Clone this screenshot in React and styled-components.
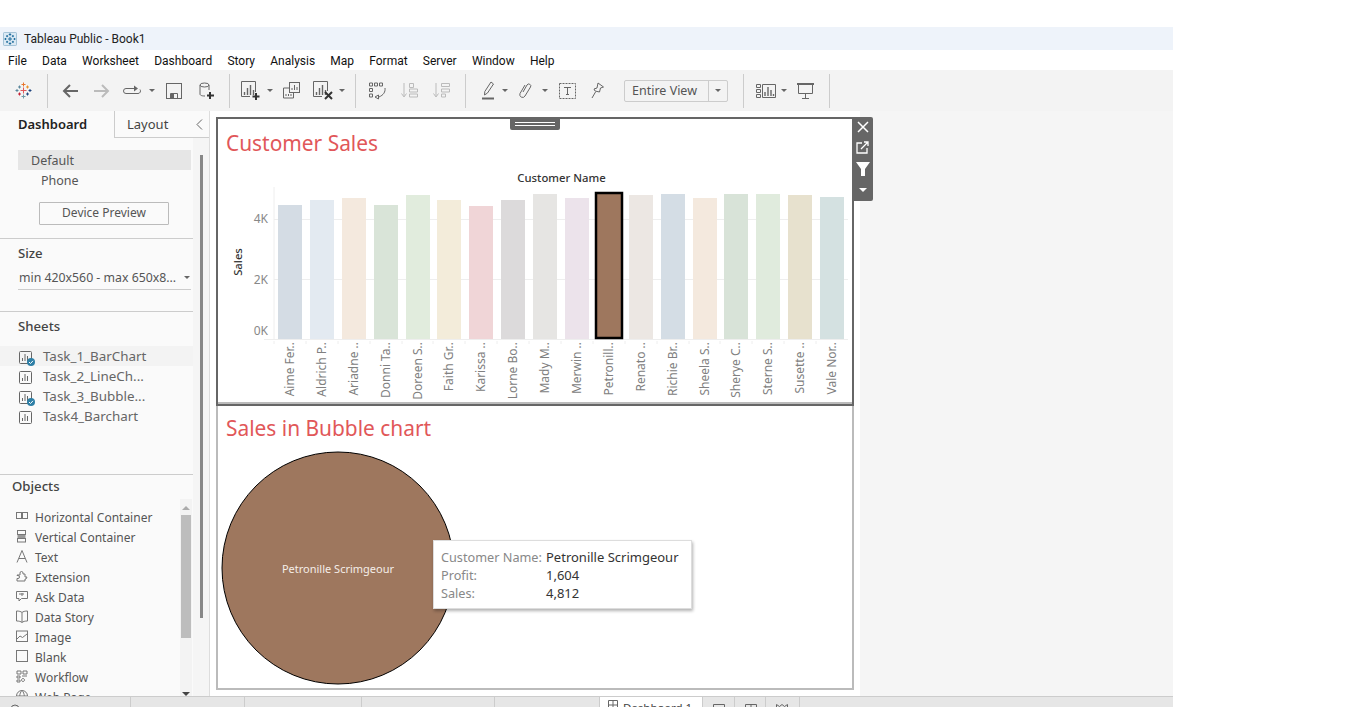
import React from "react";
import styled, { createGlobalStyle } from "styled-components";

const FONT = `"Noto Sans", "Open Sans", Arial, sans-serif`;
const ICON = "#666";
const OFF = "#bbb";

const GlobalStyle = createGlobalStyle`
	html, body {
		margin: 0;
		padding: 0;
		height: 100%;
		background: #fff;
		overflow: hidden;
	}
	body {
		font-family: ${FONT};
		color: #333;
	}
`;

const bars = [
	{ name: "Aime Fer..", x: 278, top: 205, color: "#d4dce4" },
	{ name: "Aldrich P..", x: 310, top: 200, color: "#e3eaf1" },
	{ name: "Ariadne ..", x: 342, top: 198, color: "#f4e9de" },
	{ name: "Donni Ta..", x: 374, top: 205, color: "#d9e4d8" },
	{ name: "Doreen S..", x: 406, top: 195, color: "#e1ecdd" },
	{ name: "Faith Gr..", x: 437, top: 200, color: "#f3ecda" },
	{ name: "Karissa ..", x: 469, top: 206, color: "#f0d5d7" },
	{ name: "Lorne Bo..", x: 501, top: 200, color: "#dcdadb" },
	{ name: "Mady M..", x: 533, top: 194, color: "#e6e5e3" },
	{ name: "Merwin ..", x: 565, top: 198, color: "#ece3eb" },
	{ name: "Petronill..", x: 597, top: 194, color: "#9e775e", selected: true },
	{ name: "Renato ..", x: 629, top: 195, color: "#ece7e3" },
	{ name: "Richie Br..", x: 661, top: 194, color: "#d4dde5" },
	{ name: "Sheela S..", x: 693, top: 198, color: "#f4e9de" },
	{ name: "Sherye C..", x: 724, top: 194, color: "#d8e3d8" },
	{ name: "Sterne S..", x: 756, top: 194, color: "#e0ebdd" },
	{ name: "Susette ..", x: 788, top: 195, color: "#e7e1ce" },
	{ name: "Vale Nor..", x: 820, top: 197, color: "#d4e1e1" },
];

const menus = ["File", "Data", "Worksheet", "Dashboard", "Story", "Analysis", "Map", "Format", "Server", "Window", "Help"];

const Page = styled.div`
	width: 1173px;
	height: 707px;
	padding-top: 27px;
	box-sizing: border-box;
	display: flex;
	flex-direction: column;
	overflow: hidden;
`;

const TitleBar = styled.div`
	height: 23px;
	background: #eef3fa;
	display: flex;
	align-items: center;
	gap: 7px;
	padding-left: 3px;
	font-family: Roboto, sans-serif;
	font-size: 12px;
	color: #222;
`;

const MenuBar = styled.div`
	height: 20px;
	display: flex;
	align-items: center;
	padding: 2px 0 0 8px;
	box-sizing: border-box;
	gap: 15.2px;
	font-family: Roboto, sans-serif;
	font-size: 12px;
	color: #111;
`;

const Toolbar = styled.div`
	height: 41px;
	background: #f3f3f3;
	display: flex;
	align-items: center;
	padding-left: 15px;
`;

const Sep = styled.div`
	width: 1px;
	height: 34px;
	background: #ccc;
	margin-left: ${(p) => p.$ml}px;
`;

const Ico = styled.svg`
	flex: none;
	display: block;
	margin-left: ${(p) => p.$ml || 0}px;
`;

const Combo = styled.div`
	margin-left: ${(p) => p.$ml}px;
	width: 104px;
	height: 22px;
	box-sizing: border-box;
	border: 1px solid #ccc;
	border-radius: 2px;
	display: flex;
	align-items: center;
	font-size: 12.5px;
	color: #555;
`;

const ComboText = styled.span`
	flex: 1;
	padding-left: 7px;
`;

const ComboArrow = styled.span`
	width: 18px;
	height: 100%;
	border-left: 1px solid #ccc;
	display: flex;
	align-items: center;
	justify-content: center;
`;

const Caret = styled.span`
	flex: none;
	width: 0;
	height: 0;
	margin-left: ${(p) => p.$ml || 0}px;
	border-left: 3px solid transparent;
	border-right: 3px solid transparent;
	border-top: 3px solid ${(p) => p.$color || "#666"};
`;

const Body = styled.div`
	flex: 1;
	min-height: 0;
	display: flex;
	background: #f5f5f5;
`;

const Side = styled.aside`
	width: 210px;
	box-sizing: border-box;
	flex: none;
	display: flex;
	flex-direction: column;
	background: #fafafa;
	border-right: 1px solid #ddd;
`;

const Tabs = styled.div`
	height: 27px;
	flex: none;
	display: flex;
`;

const Tab = styled.div`
	box-sizing: border-box;
	width: ${(p) => p.$w}px;
	display: flex;
	align-items: center;
	justify-content: space-between;
	font-size: 13px;
	font-weight: ${(p) => (p.$active ? 600 : 400)};
	color: ${(p) => (p.$active ? "#222" : "#444")};
	padding-left: ${(p) => (p.$active ? 18 : 12)}px;
	padding-right: 6px;
	padding-bottom: ${(p) => (p.$active ? 1 : 0)}px;
	border-left: ${(p) => (p.$active ? "none" : "1px solid #ccc")};
	border-bottom: ${(p) => (p.$active ? "none" : "1px solid #ccc")};
`;

const SideBody = styled.div`
	flex: 1;
	min-height: 0;
	display: flex;
`;

const SideMain = styled.div`
	width: 193px;
	flex: none;
	display: flex;
	flex-direction: column;
	min-height: 0;
`;

const Gutter = styled.div`
	flex: 1;
	background: #f5f5f5;
	padding: 17px 0 0 7px;
`;

const GutterThumb = styled.div`
	width: 3px;
	height: 463px;
	background: #888;
`;

const Section = styled.section`
	box-sizing: border-box;
	flex: none;
	height: ${(p) => p.$h}px;
	padding-top: ${(p) => p.$pt || 0}px;
	border-bottom: 1px solid #ccc;
`;

const DeviceRow = styled.div`
	height: 20px;
	line-height: 22px;
	margin-left: 18px;
	width: 173px;
	box-sizing: border-box;
	font-size: 12.5px;
	color: #555;
	padding-left: ${(p) => p.$indent}px;
	background: ${(p) => (p.$active ? "#e6e6e6" : "transparent")};
`;

const DeviceButton = styled.div`
	margin: 12px 0 0 39px;
	width: 130px;
	height: 23px;
	box-sizing: border-box;
	border: 1px solid #bbb;
	border-radius: 1px;
	padding-bottom: 2px;
	font-size: 12px;
	color: #555;
	display: flex;
	align-items: center;
	justify-content: center;
`;

const Heading = styled.div`
	height: 20px;
	line-height: 20px;
	font-size: 13.2px;
	font-weight: 500;
	color: #444;
	padding-left: ${(p) => p.$left || 18}px;
`;

const SizeSelect = styled.div`
	margin: 4px 2px 0 18px;
	height: 23px;
	box-sizing: border-box;
	border-bottom: 1px solid #ccc;
	display: flex;
	align-items: center;
	justify-content: space-between;
	font-size: 12.3px;
	padding: 0 1px 2px;
	color: #555;
	white-space: nowrap;
`;

const SheetList = styled.div`
	margin-top: 10px;
`;

const SheetRow = styled.div`
	height: 20px;
	display: flex;
	align-items: center;
	padding-left: 19px;
	gap: 11px;
	font-size: 13.4px;
	color: #666;
	background: ${(p) => (p.$active ? "#f3f3f3" : "transparent")};
`;

const SheetIconWrap = styled.span`
	position: relative;
	width: 13px;
	height: 13px;
	flex: none;
`;

const SheetCheck = styled.svg`
	position: absolute;
	right: -3px;
	bottom: -3px;
`;

const Objects = styled.div`
	flex: 1;
	min-height: 0;
	padding-top: 1px;
	display: flex;
	flex-direction: column;
`;

const ObjectsBody = styled.div`
	flex: 1;
	min-height: 0;
	margin-top: 3px;
	display: flex;
`;

const ObjectList = styled.div`
	width: 180px;
	padding-top: 7px;
	overflow: hidden;
`;

const ObjectRow = styled.div`
	height: 20px;
	display: flex;
	align-items: center;
	gap: 7px;
	padding-left: 16px;
	font-size: 12px;
	color: #555;
	white-space: nowrap;
`;

const ObjectLabel = styled.span`
	padding-top: 2px;
`;

const InnerScroll = styled.div`
	width: 12px;
	margin-right: 1px;
	background: #f3f3f3;
	display: flex;
	flex-direction: column;
	align-items: center;
	padding-top: 7px;
	gap: 5px;
`;

const InnerThumb = styled.div`
	width: 10px;
	height: 123px;
	background: #bdbdbd;
`;

const ScrollUp = styled.span`
	width: 0;
	height: 0;
	border-left: 4px solid transparent;
	border-right: 4px solid transparent;
	border-bottom: 4px solid #aaa;
`;

const ScrollDown = styled.span`
	width: 0;
	height: 0;
	margin-top: 49px;
	border-left: 4px solid transparent;
	border-right: 4px solid transparent;
	border-top: 4px solid #444;
`;

const Canvas = styled.main`
	width: 650px;
	flex: none;
	background: #fff;
	padding: 6px 0 0 6px;
	box-sizing: border-box;
`;

const Frame = styled.div`
	position: relative;
	width: 638px;
`;

const Sheet = styled.div`
	position: relative;
	box-sizing: border-box;
	height: ${(p) => p.$h}px;
	border: 2px solid ${(p) => p.$border};
	border-top-width: ${(p) => (p.$noTop ? 0 : 2)}px;
	box-shadow: ${(p) => (p.$lined ? "inset 0 -2px 0 #bbb" : "none")};
`;

const SheetTitle = styled.div`
	height: ${(p) => p.$h}px;
	padding-left: 8px;
	box-sizing: border-box;
	display: flex;
	align-items: center;
	font-size: 20.9px;
	color: #e15759;
`;

const Chart = styled.svg`
	display: block;
	font-family: ${FONT};
`;

const Handle = styled.div`
	position: absolute;
	left: 294px;
	top: 0;
	width: 50px;
	height: 13px;
	background: #666;
	border-radius: 0 0 2px 2px;
	display: flex;
	flex-direction: column;
	align-items: center;
	justify-content: center;
	gap: 2px;
`;

const HandleLine = styled.span`
	width: 40px;
	height: 1px;
	background: #fff;
`;

const FloatBar = styled.div`
	position: absolute;
	left: 637px;
	top: 0;
	width: 20px;
	height: 84px;
	background: #666;
	border-radius: 0 2px 2px 0;
	display: flex;
	flex-direction: column;
	align-items: center;
	padding: 4px 1px 0 0;
	box-sizing: border-box;
	gap: 8px;
`;

const FloatCaret = styled.svg`
	margin-top: 2px;
`;

const Tooltip = styled.div`
	position: absolute;
	left: 215px;
	top: 134px;
	width: 259px;
	height: 69px;
	box-sizing: border-box;
	background: #fff;
	border: 1px solid #ddd;
	box-shadow: 1px 2px 3px rgba(0, 0, 0, 0.3);
	padding: 7px 0 0 7px;
	display: grid;
	grid-template-columns: 105px 1fr;
	grid-auto-rows: 18px;
	align-items: center;
	font-size: 12.7px;
	white-space: nowrap;
`;

const TipKey = styled.span`
	color: #888;
`;

const TipValue = styled.span`
	color: #333;
	font-size: 13px;
`;

const StatusBar = styled.footer`
	height: 11px;
	flex: none;
	box-sizing: border-box;
	background: #e6e6e6;
	border-top: 1px solid #ccc;
	display: flex;
	overflow: hidden;
`;

const StatusCell = styled.div`
	box-sizing: border-box;
	width: ${(p) => p.$w}px;
	flex: none;
	height: 20px;
	border-right: 1px solid #ccc;
	display: flex;
	align-items: flex-start;
	gap: 5px;
	padding: ${(p) => p.$pt || 6}px 0 0 ${(p) => p.$pl || 0}px;
	font-size: 11.5px;
	line-height: 16px;
	color: #444;
	background: ${(p) => (p.$active ? "#fff" : "transparent")};
`;

const Crosses = ({ list, size = 17, view = 34 }) => (
	<Ico width={size} height={size} viewBox={`0 0 ${view} ${view}`}>
		{list.map(([x, y, r, c], i) => (
			<path key={i} d={`M${x - r} ${y}H${x + r}M${x} ${y - r}V${y + r}`} stroke={c} strokeWidth="2" />
		))}
	</Ico>
);

const logoCrosses = [
	[17, 5, 4, "#e8762c"], [9, 10, 3, "#5b879b"], [25, 10, 3, "#eb912b"], [4, 17, 3, "#59879b"],
	[17, 17, 6, "#e15759"], [30, 17, 3, "#1f447e"], [9, 24, 3, "#c72035"], [25, 24, 3, "#1f447e"], [17, 29, 4, "#7099a6"],
];

const WinLogo = () => (
	<Ico width="14" height="14" viewBox="0 0 34 34">
		<rect x="1" y="1" width="32" height="32" rx="3" fill="#dbe9f4" stroke="#8fb4cd" strokeWidth="2" />
		{[[17, 6, 3], [10, 10, 2.5], [24, 10, 2.5], [6, 17, 2.5], [17, 17, 5], [28, 17, 2.5], [10, 24, 2.5], [24, 24, 2.5], [17, 28, 3]].map(([x, y, r], i) => (
			<path key={i} d={`M${x - r} ${y}H${x + r}M${x} ${y - r}V${y + r}`} stroke="#1f6d9c" strokeWidth="2.4" />
		))}
	</Ico>
);

const Arrow = ({ ml, color, flip }) => (
	<Ico $ml={ml} width="16" height="14" viewBox="0 0 16 14" fill="none" stroke={color} strokeWidth="2">
		{flip ? <path d="M0 7H14M8 1l6 6-6 6" /> : <path d="M16 7H2M8 1L2 7l6 6" />}
	</Ico>
);

const BarsGlyph = ({ x = 3, y = 3, color = ICON }) => (
	<path d={`M${x} ${y + 7}v3M${x + 3} ${y + 3}v7M${x + 6} ${y}v10M${x + 9} ${y + 5}v5`} stroke={color} strokeWidth="1.4" fill="none" />
);

const SheetGlyph = () => (
	<svg width="13" height="13" viewBox="0 0 13 13" fill="none" stroke="#666">
		<rect x=".5" y=".5" width="12" height="12" rx="1" />
		<path d="M3.500 7v3M6 3v7M8.500 5v5" />
	</svg>
);

const SheetIcon = ({ used }) => (
	<SheetIconWrap>
		<SheetGlyph />
		{used && (
			<SheetCheck width="8" height="8" viewBox="0 0 8 8">
				<circle cx="4" cy="4" r="4" fill="#2e7fa6" />
				<path d="M2 4l1.500 1.500L6 2.800" stroke="#fff" fill="none" />
			</SheetCheck>
		)}
	</SheetIconWrap>
);

const objectIcons = {
	horizontal: <><rect x=".5" y="2.500" width="5" height="6" /><rect x="6.500" y="2.500" width="5" height="6" /></>,
	vertical: <><rect x="1.500" y=".5" width="8" height="4" /><rect x="1.500" y="5" width="8" height="3" fill="#999" stroke="none" /><rect x="1.500" y="8.500" width="8" height="3.500" /></>,
	text: <path d="M1 12.500L6 .5l5 12M3 8.500h6" />,
	extension: <path d="M1 5h3V3a1.500 1.500 0 0 1 3 0v1h2v3h2l-1 2H9v2H1V8.500h1a1.500 1.500 0 0 0 0-3H1z" />,
	ask: <path d="M.5 1.500h11v7h-6L3 11V8.500H.5zM3 4h5M6 3v3" />,
	story: <path d="M6 2.500C5 1.500 3 1 .5 1v10c2.500 0 4.500.5 5.500 1.500 1-1 3-1.500 5.500-1.500V1C9 1 7 1.500 6 2.500zM6 2.500v10" />,
	image: <><rect x=".5" y="1" width="11" height="10.500" /><path d="M1 9l3-3 2.500 1.500L11 4" /></>,
	blank: <rect x=".5" y=".5" width="11" height="11" />,
	workflow: <path d="M1 1h4v3H1zM7 1h4v3H7zM1 6h3v2H1zM6 6h5M1 10h3v2H1zM7 8.500a1.500 1.500 0 1 0 .01 0" />,
	web: <><circle cx="6" cy="6" r="5.500" /><path d="M.5 6h11M6 .5c-3 3-3 8 0 11M6 .5c3 3 3 8 0 11" /></>,
};

const objects = [
	["Horizontal Container", "horizontal"],
	["Vertical Container", "vertical"],
	["Text", "text"],
	["Extension", "extension"],
	["Ask Data", "ask"],
	["Data Story", "story"],
	["Image", "image"],
	["Blank", "blank"],
	["Workflow", "workflow"],
	["Web Page", "web"],
];

const ToolbarIcons = () => (
	<Toolbar>
		<Crosses list={logoCrosses} />
		<Sep $ml={15} />
		<Arrow ml={14} color={ICON} />
		<Arrow ml={16} color={OFF} flip />
		<Ico $ml={13} width="18" height="12" viewBox="0 0 18 12" fill="none" stroke={ICON}>
			<path d="M12 3.500H3a2.500 2.500 0 0 0 0 5h12a2.500 2.500 0 0 0 2-4" />
			<path d="M11 .5l4 3-4 3" fill={ICON} stroke="none" />
		</Ico>
		<Caret $ml={8} />
		<Ico $ml={11} width="16" height="16" viewBox="0 0 16 16" fill="none" stroke={ICON}>
			<rect x=".5" y=".5" width="15" height="15" />
			<path d="M4.500 15.500v-5h7v5" />
			<rect x="5" y="11" width="3" height="4" fill={ICON} stroke="none" />
		</Ico>
		<Ico $ml={17} width="15" height="18" viewBox="0 0 15 18" fill="none" stroke={ICON}>
			<path d="M1 3v9c0 1 1 2 5 2M10 3v5" />
			<ellipse cx="5.500" cy="3" rx="4.500" ry="2" />
			<path d="M11 10v7M8 13.500h7" stroke="#333" strokeWidth="2" />
		</Ico>
		<Sep $ml={15} />
		<Ico $ml={11} width="19" height="19" viewBox="0 0 19 19" fill="none" stroke={ICON}>
			<path d="M14.500 11V.5H.5v15H9" />
			<BarsGlyph x={3.500} y={4} />
			<path d="M15 12v7M11.500 15.500h7" stroke="#333" strokeWidth="2" />
		</Ico>
		<Caret $ml={7} />
		<Ico $ml={10} width="17" height="17" viewBox="0 0 17 17" fill="none" stroke={ICON}>
			<rect x="6.500" y=".5" width="10" height="10" />
			<path d="M9 8V6M11.500 8V3M14 8V5" />
			<path d="M6.500 6H.5v10h10v-5M3 14v-2M5.500 14v-2M8 14v-2" />
		</Ico>
		<Ico $ml={13} width="20" height="19" viewBox="0 0 20 19" fill="none" stroke={ICON}>
			<path d="M14.500 10V.5H.5v15H9" />
			<BarsGlyph x={3.500} y={4} />
			<path d="M12 11l7 7M19 11l-7 7" stroke="#333" strokeWidth="2" />
		</Ico>
		<Caret $ml={6} />
		<Sep $ml={10} />
		<Ico $ml={13} width="17" height="18" viewBox="0 0 17 18" fill="none" stroke={ICON}>
			<path d="M.5 1h3v3h-3zM5.500 1h3v3h-3zM10.500 1h3v3h-3zM.5 6.500h3v3h-3zM.5 12h3v3h-3z" />
			<path d="M16 6c.500 4-1.500 7-6 9M6 15l3.500-2v4z" fill="none" />
		</Ico>
		<Ico $ml={15} width="17" height="17" viewBox="0 0 17 17" fill="none" stroke={OFF}>
			<path d="M3 1v13M.5 11.500L3 15l2.500-3.500" />
			<path d="M8.500 1.500h4v4h-4zM8.500 7h8v3h-8zM8.500 12h8v3h-8z" />
		</Ico>
		<Ico $ml={15} width="17" height="17" viewBox="0 0 17 17" fill="none" stroke={OFF}>
			<path d="M3 1v13M.5 11.500L3 15l2.500-3.500" />
			<path d="M8.500 1.500h8v3h-8zM8.500 7h8v3h-8zM8.500 12h4v3h-4z" />
		</Ico>
		<Sep $ml={15} />
		<Ico $ml={16} width="12" height="19" viewBox="0 0 12 19" fill="none" stroke={ICON}>
			<path d="M9 1l2.500 2-6 9L2.500 14l.3-3.500z" />
			<path d="M0 17.500h12" strokeWidth="2" />
		</Ico>
		<Caret $ml={8} />
		<Ico $ml={11} width="13" height="17" viewBox="0 0 13 17" fill="none" stroke={ICON}>
			<path d="M4 10l4-7a2 2 0 0 1 3.500 2L6 14a2.800 2.800 0 0 1-5-2.500L6 3" />
		</Ico>
		<Caret $ml={10} />
		<Ico $ml={11} width="17" height="16" viewBox="0 0 17 16" fill="none" stroke={ICON}>
			<rect x=".5" y=".5" width="16" height="15" strokeDasharray="2 1" />
			<path d="M5 4.500h7M8.500 4.500v7M7 11.500h3" />
		</Ico>
		<Ico $ml={15} width="13" height="17" viewBox="0 0 13 17" fill="none" stroke={ICON}>
			<path d="M7 1l5.500 4-3 1-1 4L4 9l-1-2 3-1zM4.500 10L1 16" />
		</Ico>
		<Combo $ml={20}>
			<ComboText>Entire View</ComboText>
			<ComboArrow>
				<Caret />
			</ComboArrow>
		</Combo>
		<Sep $ml={15} />
		<Ico $ml={12} width="20" height="14" viewBox="0 0 20 14" fill="none" stroke={ICON}>
			<path d="M.5.5h4v3h-4zM.5 5.500h4v3h-4zM.5 10.500h4v3h-4zM6.500.5h13v13h-13z" />
			<path d="M9 12V8M12 12V3M15 12V6M17.500 12v-2" strokeWidth="1.400" />
		</Ico>
		<Caret $ml={5} />
		<Ico $ml={10} width="17" height="16" viewBox="0 0 17 16" fill="none" stroke={ICON}>
			<path d="M0 1h17" strokeWidth="2" />
			<path d="M1.500 1v9.500h14V1M8.500 10.500V15M5 15.500h7" />
		</Ico>
		<Sep $ml={15} />
	</Toolbar>
);

const SideBar = () => (
	<Side>
		<Tabs>
			<Tab $w={114} $active>Dashboard</Tab>
			<Tab $w={95}>
				Layout
				<svg width="7" height="11" viewBox="0 0 7 11" fill="none" stroke="#666">
					<path d="M6 .5l-5 5 5 5" />
				</svg>
			</Tab>
		</Tabs>
		<SideBody>
			<SideMain>
				<Section $h={101} $pt={12}>
					<DeviceRow $active $indent={13}>Default</DeviceRow>
					<DeviceRow $indent={23}>Phone</DeviceRow>
					<DeviceButton>Device Preview</DeviceButton>
				</Section>
				<Section $h={73} $pt={4}>
					<Heading>Size</Heading>
					<SizeSelect>
						min 420x560 - max 650x8...
						<Caret />
					</SizeSelect>
				</Section>
				<Section $h={163} $pt={4}>
					<Heading>Sheets</Heading>
					<SheetList>
						<SheetRow $active><SheetIcon used />Task_1_BarChart</SheetRow>
						<SheetRow><SheetIcon />Task_2_LineCh...</SheetRow>
						<SheetRow><SheetIcon used />Task_3_Bubble...</SheetRow>
						<SheetRow><SheetIcon />Task4_Barchart</SheetRow>
					</SheetList>
				</Section>
				<Objects>
					<Heading $left={12}>Objects</Heading>
					<ObjectsBody>
						<ObjectList>
							{objects.map(([label, icon]) => (
								<ObjectRow key={label}>
									<Ico width="12" height="13" viewBox="0 0 12 13" fill="none" stroke="#777">
										{objectIcons[icon]}
									</Ico>
									<ObjectLabel>{label}</ObjectLabel>
								</ObjectRow>
							))}
						</ObjectList>
						<InnerScroll>
							<ScrollUp />
							<InnerThumb />
							<ScrollDown />
						</InnerScroll>
					</ObjectsBody>
				</Objects>
			</SideMain>
			<Gutter>
				<GutterThumb />
			</Gutter>
		</SideBody>
	</Side>
);

const BarChart = () => (
	<Chart width="634" height="235" viewBox="218 167 634 235">
		<path d="M274 187V339M274 219.500H848M274 279.500H848M264 339.500H848" stroke="#eee" />
		{bars.map((b) => (
			<path key={b.name} d={`M${b.x - 4} 341v3`} stroke="#eee" />
		))}
		{bars.map((b) =>
			b.selected ? (
				<rect key={b.name} x={b.x - 1} y={b.top - 1} width="26" height={339 - b.top} fill={b.color} stroke="#000" strokeWidth="2.5" />
			) : (
				<rect key={b.name} x={b.x} y={b.top} width="24" height={339 - b.top} fill={b.color} />
			)
		)}
		<text x="561.500" y="182" fontSize="11.300" fontWeight="500" fill="#333" textAnchor="middle">Customer Name</text>
		<text transform="translate(242 262) rotate(-90)" fontSize="11.300" fontWeight="500" fill="#333" textAnchor="middle">Sales</text>
		{[["4K", 223], ["2K", 284], ["0K", 335]].map(([t, y]) => (
			<text key={t} x="268" y={y} fontSize="12" fill="#888" textAnchor="end">{t}</text>
		))}
		{bars.map((b) => (
			<text
				key={b.name}
				transform={`translate(${b.x + 16} 342) rotate(-90)`}
				fontSize="12"
				fill="#808080"
				textAnchor="end"
			>
				{b.name}
			</text>
		))}
	</Chart>
);

const BubbleChart = () => (
	<Chart width="634" height="238" viewBox="218 450 634 238">
		<circle cx="338" cy="568" r="116" fill="#9e775e" stroke="#000" />
		<text x="338" y="573" fontSize="11" fill="#f5eee8" textAnchor="middle">Petronille Scrimgeour</text>
	</Chart>
);

const App = () => (
	<>
		<GlobalStyle />
		<Page>
			<TitleBar>
				<WinLogo />
				Tableau Public - Book1
			</TitleBar>
			<MenuBar>
				{menus.map((m) => (
					<span key={m}>{m}</span>
				))}
			</MenuBar>
			<ToolbarIcons />
			<Body>
				<SideBar />
				<Canvas>
					<Frame>
						<Sheet $h={289} $border="#666" $lined>
							<SheetTitle $h={48}>Customer Sales</SheetTitle>
							<BarChart />
						</Sheet>
						<Sheet $h={284} $border="#bbb" $noTop>
							<SheetTitle $h={44}>Sales in Bubble chart</SheetTitle>
							<BubbleChart />
							<Tooltip>
								<TipKey>Customer Name:</TipKey>
								<TipValue>Petronille Scrimgeour</TipValue>
								<TipKey>Profit:</TipKey>
								<TipValue>1,604</TipValue>
								<TipKey>Sales:</TipKey>
								<TipValue>4,812</TipValue>
							</Tooltip>
						</Sheet>
						<Handle>
							<HandleLine />
							<HandleLine />
						</Handle>
						<FloatBar>
							<svg width="12" height="12" viewBox="0 0 12 12" stroke="#fff" strokeWidth="1.500">
								<path d="M1 1l10 10M11 1L1 11" />
							</svg>
							<svg width="13" height="13" viewBox="0 0 13 13" fill="none" stroke="#fff" strokeWidth="1.300">
								<path d="M6 2H1v10h10V7M5 8l7-7M8 1h4v4" />
							</svg>
							<svg width="14" height="14" viewBox="0 0 14 14" fill="#fff">
								<path d="M0 0h14L9 7v7H5V7z" />
							</svg>
							<FloatCaret width="8" height="8" viewBox="0 0 8 8" fill="#fff">
								<path d="M0 2h8L4 6z" />
							</FloatCaret>
						</FloatBar>
					</Frame>
				</Canvas>
			</Body>
			<StatusBar>
				<StatusCell $w={131} $pl={10} $pt={7}>
					<svg width="10" height="10" viewBox="0 0 10 10" fill="none" stroke="#666">
						<circle cx="5" cy="5" r="4" />
					</svg>
				</StatusCell>
				<StatusCell $w={114} />
				<StatusCell $w={117} />
				<StatusCell $w={133} />
				<StatusCell $w={105} />
				<StatusCell $w={103} $active $pl={8} $pt={3}>
					<svg width="10" height="10" viewBox="0 0 10 10" fill="none" stroke="#666">
						<path d="M.5.5h9v9h-9zM5 .5v9M.5 5h9" />
					</svg>
					Dashboard 1
				</StatusCell>
				<StatusCell $w={32} $pl={10} $pt={7}>
					<svg width="12" height="10" viewBox="0 0 12 10" fill="none" stroke="#666">
						<path d="M.5.5h11v9H.5z" />
					</svg>
				</StatusCell>
				<StatusCell $w={31} $pl={10} $pt={7}>
					<svg width="12" height="10" viewBox="0 0 12 10" fill="none" stroke="#666">
						<path d="M.5.5h11v9H.5zM6 .5v9" />
					</svg>
				</StatusCell>
				<StatusCell $w={34} $pl={10} $pt={7}>
					<svg width="12" height="10" viewBox="0 0 12 10" fill="none" stroke="#666">
						<path d="M.5.5l3 2 2.500-2 2.500 2 3-2v9h-11z" />
					</svg>
				</StatusCell>
			</StatusBar>
		</Page>
	</>
);

export default App;
